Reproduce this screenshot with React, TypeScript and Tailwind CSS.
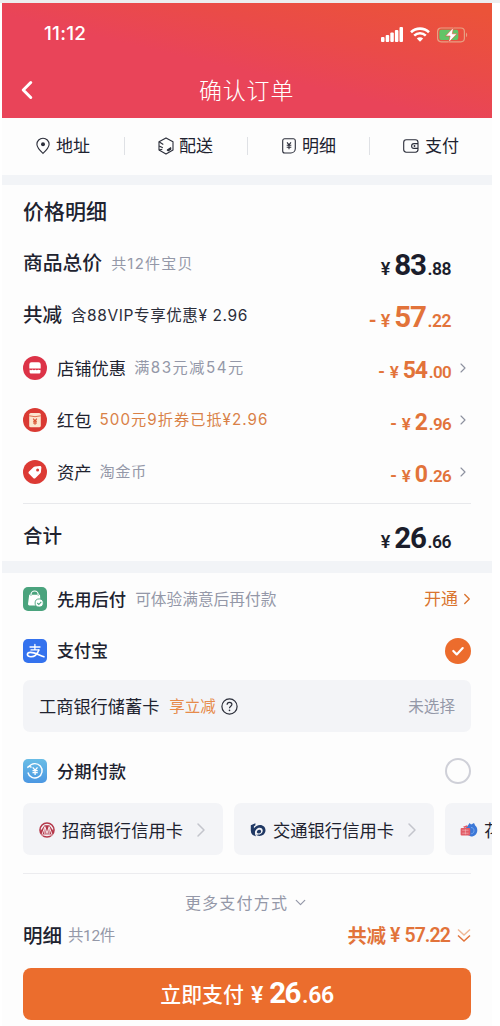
import React from 'react';
import { ChevronRight, ChevronDown, ChevronLeft } from 'lucide-react';

const DISCOUNTS = [
  { label: '店铺优惠', note: '满83元减54元', noteClass: 'text-[#9498a8] tracking-[1.5px]', int: '54', dec: '.00', icon: ShopIcon },
  { label: '红包', note: '500元9折券已抵¥2.96', noteClass: 'text-[#d98147] tracking-[1.03px]', int: '2', dec: '.96', icon: PacketIcon },
  { label: '资产', note: '淘金币', noteClass: 'text-[#9498a8] tracking-[0.5px]', int: '0', dec: '.26', icon: TagIcon },
];

function PinIcon() {
  return (
    <svg width="14" height="18" viewBox="0 0 14 18" fill="none" stroke="#2b2e3a" strokeWidth="1.1">
      <path d="M7 16.4C4.600 14.200.9 10.800.9 7.300a6.100 6.100 0 0 1 12.200 0c0 3.500-3.700 6.900-6.100 9.100z" />
      <circle cx="7" cy="7.200" r="2" fill="#2b2e3a" stroke="none" />
    </svg>
  );
}

function BoxIcon() {
  return (
    <svg width="16" height="18" viewBox="0 0 16 18" fill="none" stroke="#2b2e3a" strokeWidth="1.1" strokeLinejoin="round">
      <path d="M8 .9l7 3.900v8.300l-7 4-7-4V4.800z" />
      <path d="M1 4.800l4.300 2.700M1.200 8.900l3.600 1.900M1 13l3.300-.8" />
      <path d="M9.300 13l3.400-2.300v1.500l-2.400 1.700z" fill="#2b2e3a" />
    </svg>
  );
}

function BillIcon() {
  return (
    <svg width="14" height="16" viewBox="0 0 14 16" fill="none" stroke="#2b2e3a" strokeWidth="1.1">
      <path d="M2.700.8h8.600a2 2 0 0 1 2 2v7.700c0 2.500-2 4.500-4.500 4.500H2.700a2 2 0 0 1-2-2V2.800a2 2 0 0 1 2-2z" />
      <path d="M5 4.300L7 6.800l2-2.500M4.700 7.300h4.600M4.700 9.200h4.600M7 6.800v4.500" />
    </svg>
  );
}

function WalletIcon() {
  return (
    <svg width="16" height="14" viewBox="0 0 16 14" fill="none" stroke="#2b2e3a" strokeWidth="1.1">
      <rect x=".7" y=".8" width="14.300" height="12.400" rx="2.600" />
      <path d="M15 4.600h-4a2.400 2.400 0 0 0 0 4.800h4" />
      <circle cx="11.500" cy="7" r=".9" fill="#2b2e3a" stroke="none" />
    </svg>
  );
}

function ShopIcon() {
  return (
    <svg width="24" height="24" viewBox="0 0 24 24">
      <circle cx="12" cy="12" r="12" fill="#dc3347" />
      <path d="M8.500 6.200h7a2.200 2.200 0 0 1 2.200 2.200v4.100H6.300V8.400a2.200 2.200 0 0 1 2.200-2.200z" fill="#fff" />
      <path d="M6.600 13.500c.9.900 2.100.9 2.900 0 .9.900 2.100.9 2.900 0 .9.900 2.100.9 2.900 0 .6.600 1.500.7 2.200.2v2.300c0 .9-.6 1.500-1.500 1.500H8.100c-.9 0-1.500-.6-1.500-1.500z" fill="#fff" />
    </svg>
  );
}

function PacketIcon() {
  return (
    <svg width="24" height="24" viewBox="0 0 24 24">
      <circle cx="12" cy="12" r="12" fill="#da3a33" />
      <rect x="6.200" y="5" width="11.600" height="14.300" rx="1.600" fill="#fbe6cf" />
      <path d="M6.200 7.800q5.800 1.800 11.600 0" stroke="#e0704f" strokeWidth="1" fill="none" />
      <path d="M10.200 10.600l1.800 2.300 1.800-2.300M10 13.200h4M10 15h4M12 13v3.700" stroke="#d9502f" strokeWidth="1.100" fill="none" />
    </svg>
  );
}

function TagIcon() {
  return (
    <svg width="24" height="24" viewBox="0 0 24 24">
      <circle cx="12" cy="12" r="12" fill="#dc3a34" />
      <path d="M12 6.600l4.700-.7c1-.1 1.700.5 1.700 1.500l-.5 4.700c-.1.500-.3.900-.6 1.200l-4.800 4.600c-.7.700-1.600.7-2.300 0l-4.200-4.200c-.7-.7-.7-1.600 0-2.300l4.700-4.300c.4-.3.800-.5 1.300-.5z" fill="#fff" />
      <circle cx="14.600" cy="9.900" r="1.500" fill="#dc3a34" />
    </svg>
  );
}

function BagIcon() {
  return (
    <svg width="24" height="24" viewBox="0 0 24 24">
      <rect width="24" height="24" rx="5" fill="#4aa37d" />
      <path d="M8 8.300V7.600a3.600 3.600 0 0 1 7.200 0v.7" stroke="#fff" strokeWidth="1.200" fill="none" />
      <path d="M6.200 7.800h10.800l.7 10.700H6.300a1.300 1.300 0 0 1-1.300-1.400z" fill="#fff" />
      <path d="M8 8.800V7.800M15.200 8.800V7.800" stroke="#4aa37d" strokeWidth=".8" fill="none" />
      <circle cx="16.200" cy="16" r="4.100" fill="#fff" stroke="#4aa37d" strokeWidth=".9" />
      <path d="M14.300 16l1.500 1.500 2.500-2.700" stroke="#4aa37d" strokeWidth="1.100" fill="none" />
    </svg>
  );
}

function AlipayIcon() {
  return (
    <svg width="24" height="24" viewBox="0 0 24 24" fill="none" stroke="#fff" strokeLinecap="round">
      <rect width="24" height="24" rx="5" fill="#3472ee" stroke="none" />
      <path d="M7 8h10M11.900 5.500v5.300M8 10.900h7.900" strokeWidth="1.300" />
      <path d="M15.800 11c-1.300 3.900-4.200 6.800-7.900 6.800-2.300 0-3.500-1-3.500-2.200 0-1.300 1.400-2.200 3.200-2.200 3.800 0 7.800 2.500 13.400 4.400" strokeWidth="1.600" />
    </svg>
  );
}

function InstallmentIcon() {
  return (
    <svg width="24" height="24" viewBox="0 0 24 24" fill="none" stroke="#fff">
      <defs>
        <linearGradient id="inst" x1="0" y1="0" x2="0" y2="1">
          <stop offset="0" stopColor="#69bde6" />
          <stop offset="1" stopColor="#4b97e2" />
        </linearGradient>
      </defs>
      <rect width="24" height="24" rx="5" fill="url(#inst)" stroke="none" />
      <path d="M6 7.700A7.200 7.200 0 1 1 4.900 13.500M4.300 8.600l2-1.500 2.200 1.200" strokeWidth="1.400" />
      <path d="M9.700 8.300l2.400 2.900 2.400-2.900M9.500 11.700h5.200M9.500 13.700h5.200M12.100 11.200v4.900" strokeWidth="1.300" />
    </svg>
  );
}

function CmbIcon() {
  return (
    <svg width="16" height="16" viewBox="0 0 16 16" fill="none">
      <circle cx="8" cy="8" r="7" stroke="#b5384a" strokeWidth="1.600" />
      <path d="M1.200 9.500L5.600 3.200h4.800l4.400 6.300-1.500 3H2.700z" fill="#b5384a" />
      <path d="M3 12.500L5.900 4.600l2.100 7 2.100-7 2.900 7.900M5.900 6v6M10.100 6v6" stroke="#f6e9ec" strokeWidth="1" />
      <path d="M2.300 13.200h11.400" stroke="#f6e9ec" strokeWidth=".6" />
    </svg>
  );
}

function BocomIcon() {
  return (
    <svg width="16" height="16" viewBox="0 0 16 16" fill="#1f3864">
      <path d="M.8 3.200L5.400 1.200v2.100L3.900 4.200v2.300C5.300 4.300 7.500 3 10 3c3.300 0 5.500 2.300 5.500 5.200 0 3.500-2.800 5.700-6 5.700-1.600 0-2.900-.5-3.700-1.300 3.500.8 6.900-.9 6.900-4 0-1.700-1.200-2.900-3-2.900-2.800 0-4.800 2.600-4.800 5.300 0 1.300.4 2.400 1.200 3.300C2.800 14 .8 11.800.8 8.600z" />
      <path d="M6.800 10.500c0-1.700 1.100-2.700 2.500-2.700 1.100 0 1.800.7 1.800 1.600 0 1.200-1.100 2-2.300 2-.8 0-1.500-.300-2-.9z" />
    </svg>
  );
}

function HuabeiIcon() {
  return (
    <svg width="18" height="16" viewBox="0 0 18 16">
      <path d="M8 3.500L9.500 1l1.600 1.500L14 1l1.200 2.500c1.400 1.200 2.100 2.800 2.100 4.700 0 3.500-2.500 6.300-6.300 6.300L6 12V5.500z" fill="#3b78d8" />
      <path d="M11 5.500c2 0 3 1.500 3 3.200s-1.200 3-2.700 3" fill="none" stroke="#79a9ee" strokeWidth="1" />
      <path d="M3 4.800l4-1.500 1 1.500-3.500 1.200z" fill="#e25b66" />
      <rect x=".6" y="6" width="9.600" height="7.500" rx="1" fill="#e25b66" />
      <path d="M2.200 8.200h6.400M2.200 11.200h6.400M5.400 7.200v5.200" stroke="#f4bcc0" strokeWidth=".6" />
    </svg>
  );
}

const TABS = [
  { label: '地址', icon: PinIcon, box: 'pl-[34px] w-[123px] gap-[6px]' },
  { label: '配送', icon: BoxIcon, box: 'pl-[33px] w-[123px] gap-[5px]' },
  { label: '明细', icon: BillIcon, box: 'pl-[34px] w-[122px] gap-[6px]' },
  { label: '支付', icon: WalletIcon, box: 'pl-[33px] w-[122px] gap-[6px]' },
];

const CARDS = [
  { name: '招商银行信用卡', icon: CmbIcon },
  { name: '交通银行信用卡', icon: BocomIcon },
];

function Price({ int, dec, minus, big, color }: { int: string; dec: string; minus?: boolean; big?: boolean; color: string }) {
  return (
    <div className={`flex items-baseline font-['Roboto'] leading-none ${big ? 'pt-[3px]' : 'pt-[5px]'} ${color}`}>
      {minus && <span className={big ? 'mr-[4px] text-[20px] font-bold' : 'mr-[5px] text-[18px] font-semibold'}>-</span>}
      <span className={big ? 'mr-[4px] text-[18px] font-semibold' : 'mr-[4px] text-[17px] font-semibold'}>¥</span>
      <span className={big ? 'text-[29.500px] font-bold tracking-[-1.300px]' : 'text-[23px] font-bold tracking-[-1.200px]'}>{int}</span>
      <span className={big ? 'ml-[2px] text-[17.500px] font-semibold tracking-[-0.500px]' : 'ml-[2px] text-[17px] font-semibold tracking-[-0.700px]'}>{dec}</span>
    </div>
  );
}

export default function App() {
  return (
    <div className="h-[1026px] w-[500px] overflow-hidden bg-white font-['Inter','Noto_Sans_CJK_SC',sans-serif] text-[#20222f]">
      <div className="h-[3px] bg-[#eceeef]" />
      <div className="ml-[2px] h-[1023px] w-[490px] overflow-hidden bg-[#fdfdfd]">
        {/* Header */}
        <header className="h-[115px] bg-[linear-gradient(to_bottom_left,#eb5339_5%,#ea4b48_32%,#e94459_55%)] text-white">
          <div className="flex h-[63px] items-center pl-[42px] pr-[24px]">
            <span className="text-[19px] font-medium tracking-[0.200px]">11:12</span>
            <div className="ml-auto flex items-center gap-[7px]">
              <svg width="22" height="15" viewBox="0 0 22 15" fill="#fff">
                <rect x="0" y="10" width="3.500" height="5" rx="1" />
                <rect x="4.700" y="8" width="3.500" height="7" rx="1" />
                <rect x="9.300" y="5.500" width="3.500" height="9.500" rx="1" />
                <rect x="13.900" y="3" width="3.500" height="12" rx="1" />
                <rect x="18.500" y="0" width="3.500" height="15" rx="1" />
              </svg>
              <svg width="20" height="15" viewBox="0 0 20 15" fill="none" stroke="#fff">
                <path d="M1 5.200a13 13 0 0 1 18 0" strokeWidth="2.600" />
                <path d="M4.200 8.700a8.300 8.300 0 0 1 11.600 0" strokeWidth="2.500" />
                <path d="M10 14.800l-3.200-3.300a4.600 4.600 0 0 1 6.400 0z" fill="#fff" stroke="none" />
              </svg>
              <svg width="31" height="16" viewBox="0 0 31 16">
                <rect x=".6" y="1" width="26.800" height="13.800" rx="3.500" fill="none" stroke="#e7a083" strokeWidth="1.200" />
                <rect x="2.300" y="2.700" width="19" height="10.400" rx="2" fill="#62c467" />
                <path d="M29 5.500c1.600.8 1.600 4 0 4.800z" fill="#e7a083" />
                <path d="M16.500.5L8.500 9h4.600l-1.500 6.500L20 6.800h-4.700z" fill="#fff" stroke="#ea523e" strokeWidth=".6" />
              </svg>
            </div>
          </div>
          <div className="flex h-[48px] items-center">
            <ChevronLeft className="ml-[10px]" size={30} strokeWidth={2.400} />
            <h1 className="ml-[157px] pt-[2px] text-[23px] font-light tracking-[0.800px]">确认订单</h1>
          </div>
        </header>

        {/* Tabs */}
        <nav className="flex h-[57px] items-center pb-[2px]">
          {TABS.map((tab, i) => (
            <div key={tab.label} className={`flex items-center ${tab.box} ${i < 3 ? 'h-[18px] border-r border-[#dfe1e5]' : ''}`}>
              <tab.icon />
              <span className="whitespace-nowrap pt-[2px] text-[17px]">{tab.label}</span>
            </div>
          ))}
        </nav>
        <div className="h-[10px] bg-[#f2f4f7]" />

        {/* Price details */}
        <section className="h-[376px] pl-[21px] pr-[21px]">
          <h2 className="flex h-[53px] items-center pt-[1px] text-[21px] font-medium">价格明细</h2>
          <div className="flex h-[52px] items-center pr-[20px]">
            <span className="text-[19.800px] font-medium">商品总价</span>
            <span className="ml-[9px] text-[15px] tracking-[1.200px] text-[#9498a8]">共12件宝贝</span>
            <div className="ml-auto">
              <Price int="83" dec=".88" big color="text-[#1b1d2b]" />
            </div>
          </div>
          <div className="flex h-[52px] items-center pr-[20px]">
            <span className="text-[19.500px] font-medium">共减</span>
            <span className="ml-[9px] text-[15.500px] tracking-[0.600px] text-[#2b2e3a]">含88VIP专享优惠¥ 2.96</span>
            <div className="ml-auto">
              <Price int="57" dec=".22" minus big color="text-[#e2733a]" />
            </div>
          </div>
          {DISCOUNTS.map((d) => (
            <div key={d.label} className="flex h-[52px] items-center">
              <d.icon />
              <span className="ml-[10px] pt-[1px] text-[17.300px]">{d.label}</span>
              <span className={`ml-[8px] text-[15.200px] ${d.noteClass}`}>{d.note}</span>
              <div className="ml-auto flex items-center">
                <Price int={d.int} dec={d.dec} minus color="text-[#e2733a]" />
                <ChevronRight className="ml-[4px] text-[#8d919f]" size={16} strokeWidth={1.700} />
              </div>
            </div>
          ))}
          <div className="mt-[5px] h-px bg-[#e8e9ec]" />
          <div className="flex h-[63px] items-center pr-[20px]">
            <span className="pt-[2px] text-[19.500px] font-medium">合计</span>
            <div className="ml-auto pt-[3px]">
              <Price int="26" dec=".66" big color="text-[#1b1d2b]" />
            </div>
          </div>
        </section>
        <div className="h-[12px] bg-[#f2f4f7]" />

        {/* Payment methods */}
        <section className="pl-[21px]">
          <div className="mr-[21px] flex h-[52px] items-center">
            <BagIcon />
            <span className="ml-[10px] pt-[2px] text-[17.300px] font-medium">先用后付</span>
            <span className="ml-[9px] pt-[2px] text-[15.700px] text-[#9498a8]">可体验满意后再付款</span>
            <span className="ml-auto pt-[2px] text-[17px] text-[#d9742f]">开通</span>
            <ChevronRight className="-mr-[5px] text-[#d9742f]" size={18} strokeWidth={1.800} />
          </div>
          <div className="mr-[21px] flex h-[52px] items-center">
            <AlipayIcon />
            <span className="ml-[10px] pt-[2px] text-[17px] font-medium">支付宝</span>
            <svg className="ml-auto" width="26" height="26" viewBox="0 0 26 26" fill="none">
              <circle cx="13" cy="13" r="13" fill="#ec6c2d" />
              <path d="M8.300 13l3.400 3.400 6-6.300" stroke="#fff" strokeWidth="2.200" strokeLinecap="round" strokeLinejoin="round" />
            </svg>
          </div>
          <div className="mr-[21px] mt-[3px] flex h-[52px] items-center rounded-[7px] bg-[#f3f4f7] pl-[16px] pr-[16px]">
            <span className="pt-[2px] text-[17.200px]">工商银行储蓄卡</span>
            <span className="ml-[10px] pt-[2px] text-[15.500px] text-[#e68a4a]">享立减</span>
            <svg className="ml-[5px]" width="17" height="17" viewBox="0 0 17 17" fill="none" stroke="#2b2e3a">
              <circle cx="8.500" cy="8.500" r="7.600" strokeWidth="1.200" />
              <path d="M6.100 6.700c0-1.400 1-2.400 2.400-2.400s2.400.9 2.400 2.200c0 1.700-2.400 1.900-2.400 3.800" strokeWidth="1.200" />
              <circle cx="8.500" cy="12.400" r=".8" fill="#2b2e3a" stroke="none" />
            </svg>
            <span className="ml-auto pt-[2px] text-[15.600px] text-[#9498a8]">未选择</span>
          </div>
          <div className="mr-[21px] mt-[13px] flex h-[52px] items-center">
            <InstallmentIcon />
            <span className="ml-[10px] pt-[2px] text-[17.300px] font-medium">分期付款</span>
            <div className="ml-auto h-[26px] w-[26px] rounded-full border-2 border-[#cfd0d8]" />
          </div>
          <div className="mt-[6px] flex gap-[11px] overflow-hidden">
            {CARDS.map((card) => (
              <div key={card.name} className="flex h-[52px] w-[200px] shrink-0 items-center rounded-[7px] bg-[#f3f4f7] pl-[16px] pr-[10px] pt-[2px]">
                <card.icon />
                <span className="ml-[7px] whitespace-nowrap pt-[1px] text-[17.300px]">{card.name}</span>
                <ChevronRight className="ml-auto text-[#c3c5cc]" size={24} strokeWidth={1.500} />
              </div>
            ))}
            <div className="flex h-[52px] w-[200px] shrink-0 items-center rounded-l-[7px] bg-[#f3f4f7] pl-[15px] pt-[2px]">
              <HuabeiIcon />
              <span className="ml-[6px] pt-[1px] text-[17.300px]">花</span>
            </div>
          </div>
          <div className="mr-[21px] mt-[18px] h-px bg-[#ececef]" />
        </section>

        {/* Footer */}
        <footer className="px-[21px]">
          <div className="flex h-[56px] items-center justify-center gap-[4px] text-[#9498a8]">
            <span className="pt-[1px] text-[16px] tracking-[1.200px]">更多支付方式</span>
            <ChevronDown size={17} strokeWidth={1.700} />
          </div>
          <div className="flex h-[12px] items-center">
            <span className="pt-[2px] text-[19.500px] font-medium">明细</span>
            <span className="ml-[6px] pt-[2px] font-['Roboto','Noto_Sans_CJK_SC',sans-serif] text-[15.500px] tracking-[-0.400px] text-[#9498a8]">共12件</span>
            <div className="ml-auto flex items-center text-[#e2733a]">
              <span className="pt-[1px] text-[19.300px] font-bold">共减</span>
              <span className="ml-[4px] font-['Roboto'] text-[19.500px] font-semibold">¥</span>
              <span className="ml-[4px] font-['Roboto'] text-[19.500px] font-semibold tracking-[-0.900px]">57.22</span>
              <svg className="ml-[7px]" width="14" height="16" viewBox="0 0 14 16" fill="none" strokeWidth="1.500">
                <path d="M1 1.500l6 5.500 6-5.500" stroke="#f0b896" />
                <path d="M1 7.500l6 5.500 6-5.500" stroke="#e2733a" />
              </svg>
            </div>
          </div>
          <button className="mt-[26px] flex h-[52px] w-full items-center justify-center rounded-[8px] bg-[#eb6d2d] text-white">
            <span className="pt-[2px] text-[20.900px] font-medium">立即支付</span>
            <span className="ml-[7px] flex items-baseline font-['Roboto'] leading-none">
              <span className="text-[23px] font-semibold">¥</span>
              <span className="ml-[6px] text-[29.500px] font-bold tracking-[-1.500px]">26</span>
              <span className="ml-[2px] text-[23px] font-semibold tracking-[-0.400px]">.66</span>
            </span>
          </button>
        </footer>
      </div>
    </div>
  );
}
